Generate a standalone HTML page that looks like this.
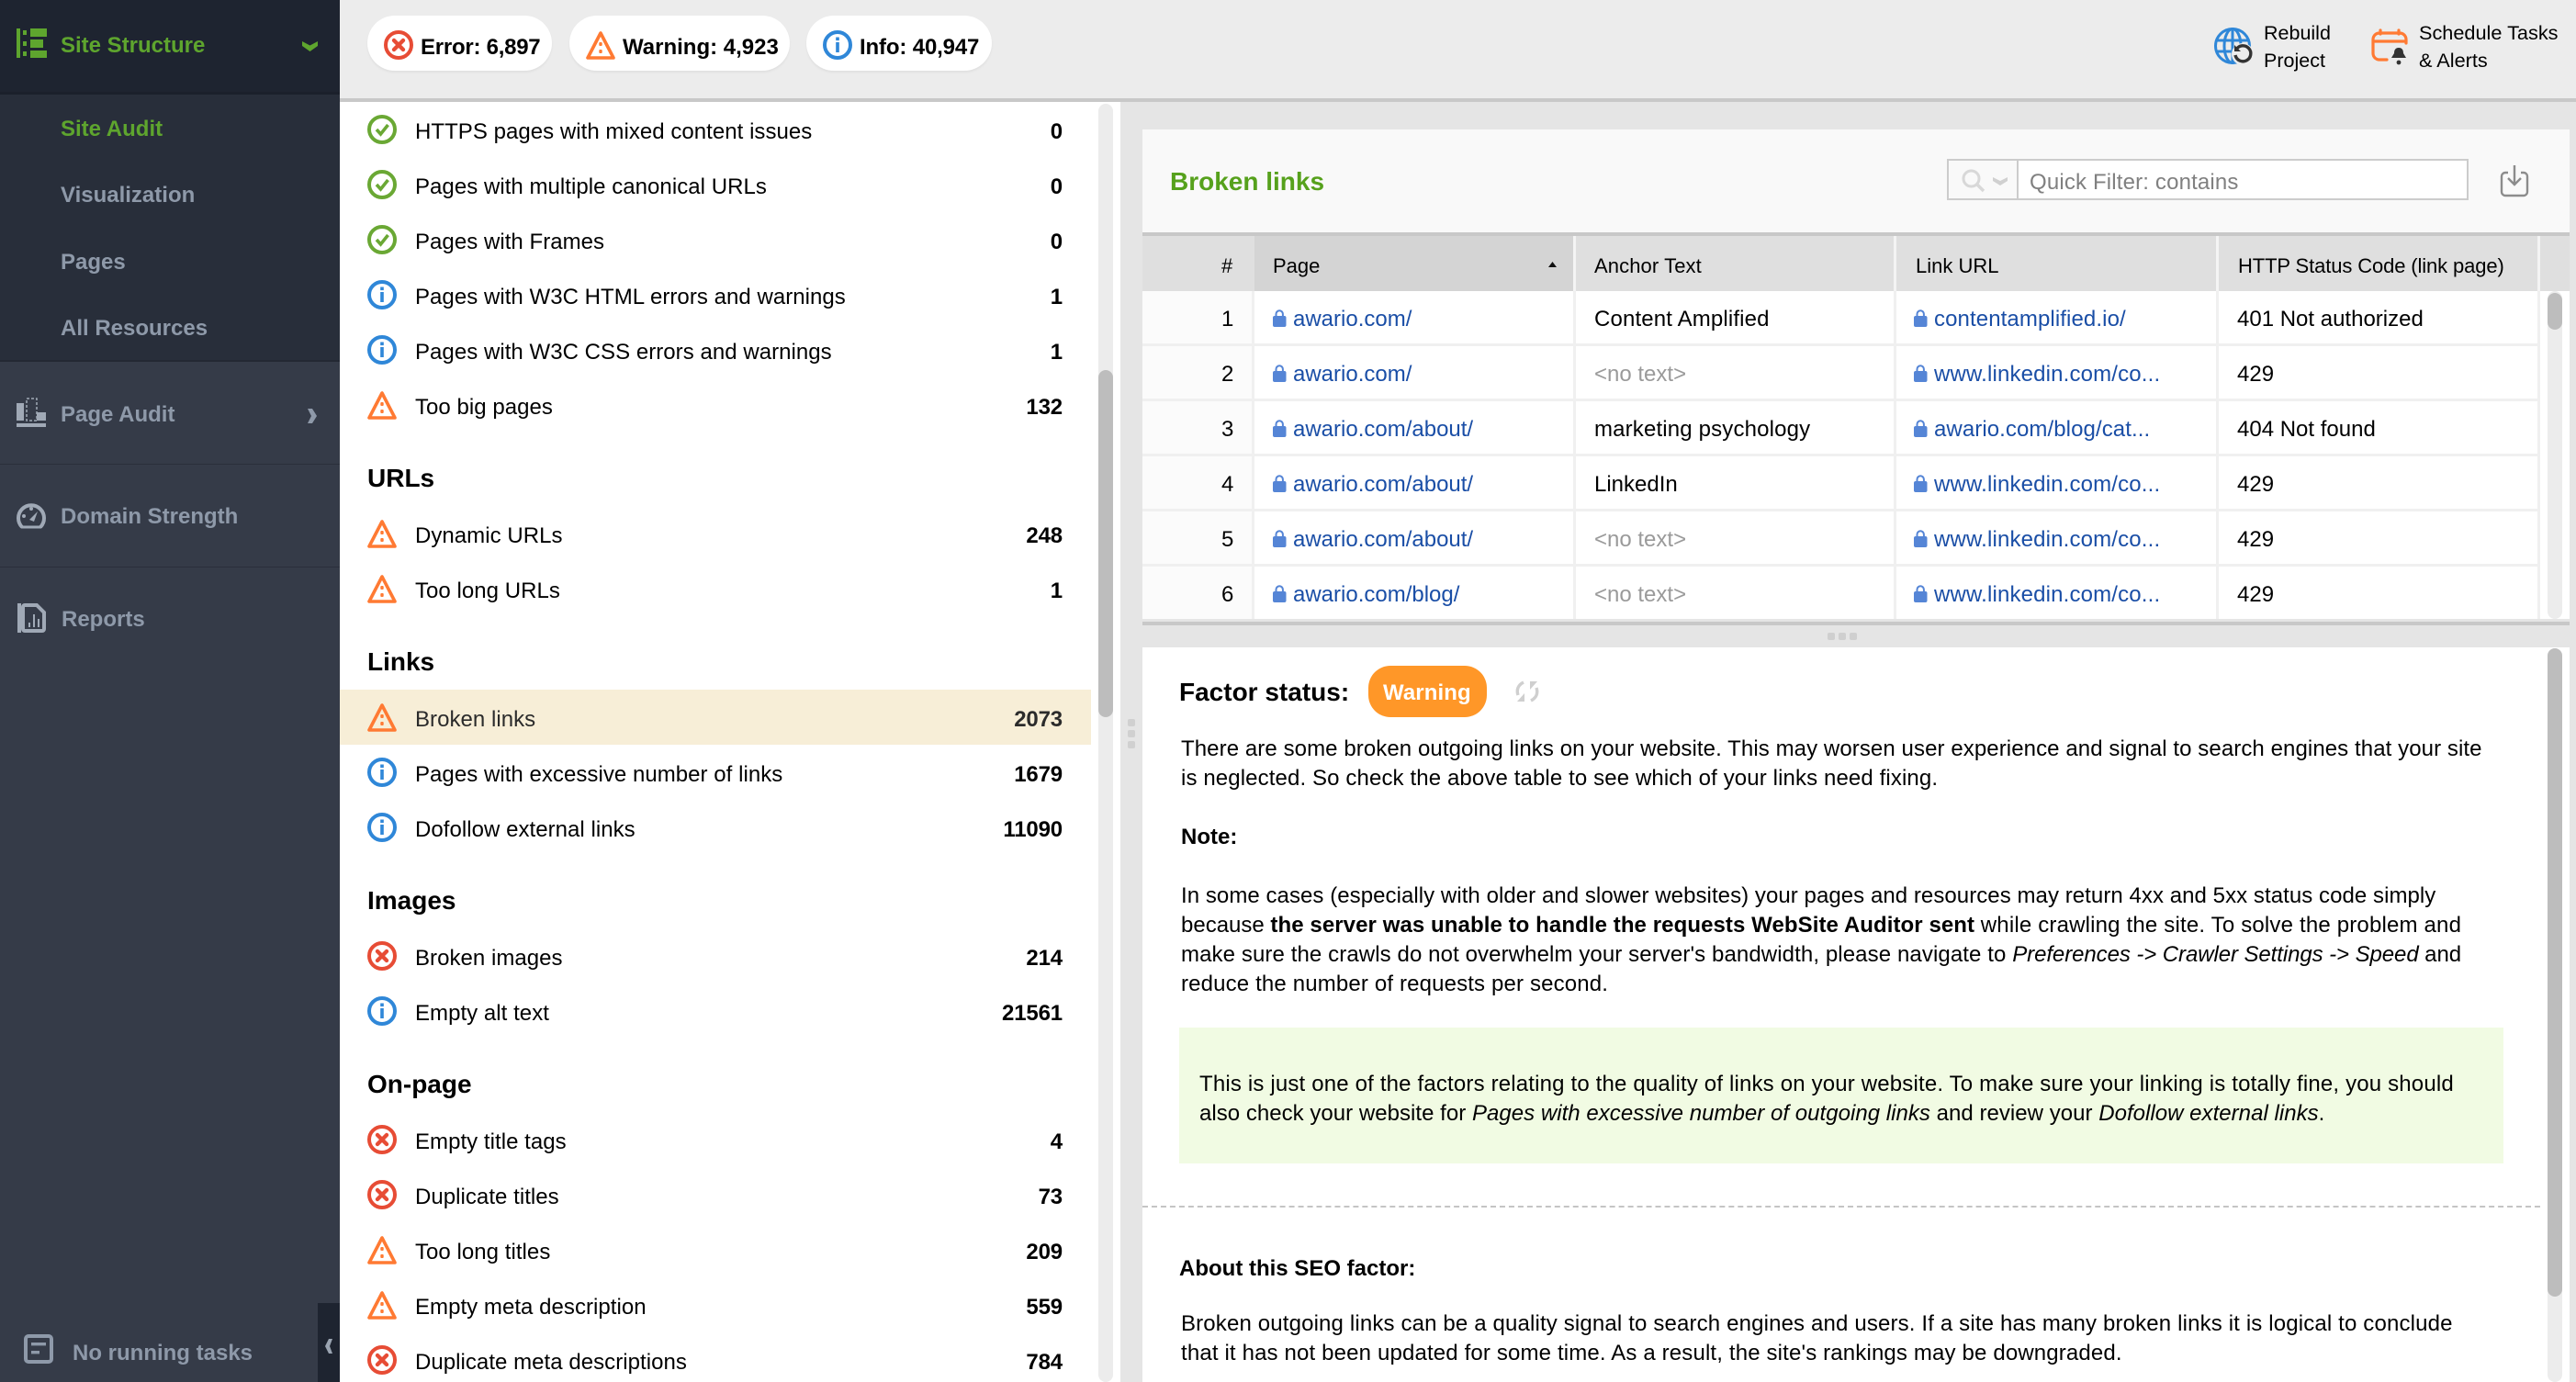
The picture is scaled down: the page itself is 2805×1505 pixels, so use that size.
<!DOCTYPE html>
<html><head><meta charset="utf-8"><title>Site Audit</title>
<style>
html,body{margin:0;padding:0;width:2805px;height:1505px;overflow:hidden;background:#e5e5e5}
body{position:relative;font-family:"Liberation Sans",Arial,sans-serif;color:#000;font-size:24px}
.b{position:absolute}
.t{position:absolute;white-space:nowrap;line-height:32px;height:32px;margin-top:1px}
.n{position:absolute;white-space:nowrap;line-height:32px;height:32px;font-weight:bold;text-align:right;right:1648px;letter-spacing:-.15px;margin-top:2px}
.h{position:absolute;white-space:nowrap;line-height:32px;height:32px;font-weight:bold;font-size:28px;left:400px}
.nav{position:absolute;white-space:nowrap;line-height:32px;height:32px;font-weight:bold;font-size:24px;color:#8e99a9;left:66px;margin-top:1px}
.i{position:absolute;width:32px;height:32px;left:400px}
.l{left:452px;letter-spacing:.04px;margin-top:2px}
.a{color:#1a4ea6}
.g{color:#9a9a9a}
.w{letter-spacing:.16px}
.lk{position:absolute;width:15px;height:19px}
svg{display:block;overflow:visible}
.hd{font-size:22px}
</style></head><body>
<svg width="0" height="0" style="position:absolute">
<symbol id="ok" viewBox="0 0 32 32"><circle cx="16" cy="16" r="14" fill="none" stroke="#6aa834" stroke-width="4"/><path d="M10 16l4.5 5 8-10" fill="none" stroke="#6aa834" stroke-width="3.6"/></symbol>
<symbol id="in" viewBox="0 0 32 32"><circle cx="16" cy="16" r="14" fill="none" stroke="#2f87d8" stroke-width="4"/><rect x="14.2" y="7.5" width="3.6" height="3.6" fill="#2f87d8"/><rect x="14.2" y="13" width="3.6" height="11" fill="#2f87d8"/></symbol>
<symbol id="er" viewBox="0 0 32 32"><circle cx="16" cy="16" r="14" fill="none" stroke="#e74c35" stroke-width="4"/><path d="M11 11l10 10M21 11l-10 10" fill="none" stroke="#e74c35" stroke-width="4.4" stroke-linecap="round"/></symbol>
<symbol id="wa" viewBox="0 0 32 32"><path d="M16 3L2 30h28z" fill="none" stroke="#ff7a33" stroke-width="3.6" stroke-linejoin="round"/><rect x="14.3" y="13" width="3.4" height="4" rx="1" fill="#ff7a33"/><rect x="14.3" y="21" width="3.4" height="4" rx="1" fill="#ff7a33"/></symbol>
<symbol id="lock" viewBox="0 0 15 19"><rect x="0" y="7" width="14.5" height="12" rx="2" fill="#5585d6"/><path d="M3.5 8V5a3.7 3.7 0 0 1 7.4 0v3" fill="none" stroke="#5585d6" stroke-width="2"/></symbol>
</svg>

<!-- sidebar -->
<div class="b" style="left:0;top:0;width:370px;height:1505px;background:#353b48"></div>
<div class="b" style="left:0;top:0;width:370px;height:100px;background:#1e2430"></div>
<div class="b" style="left:0;top:100px;width:370px;height:3px;background:#1b202b"></div>
<div class="b" style="left:0;top:103px;width:370px;height:289px;background:#282e3a"></div>
<div class="b" style="left:0;top:392px;width:370px;height:2px;background:#232833"></div>
<div class="b" style="left:0;top:505px;width:370px;height:1px;background:#2a2f3b"></div>
<div class="b" style="left:0;top:617px;width:370px;height:1px;background:#2a2f3b"></div>

<svg class="b" style="left:18px;top:31px" width="33" height="32" viewBox="0 0 33 32"><g fill="#5ea52e"><rect x="0" y="0" width="4" height="32"/><rect x="7" y="2" width="4" height="5"/><rect x="15" y="0" width="18" height="9"/><rect x="7" y="14" width="4" height="5"/><rect x="15" y="12" width="14" height="9"/><rect x="7" y="25" width="4" height="5"/><rect x="15" y="24" width="18" height="8"/></g></svg>
<div class="nav" style="top:33px;color:#5ea52e">Site Structure</div>
<svg class="b" style="left:329px;top:45px" width="17" height="11" viewBox="0 0 17 11"><path d="M0 0l8.5 4.5L17 0v5l-8.5 6L0 5z" fill="#5ea52e"/></svg>
<div class="nav" style="top:124px;color:#5ea52e">Site Audit</div>
<div class="nav" style="top:196px">Visualization</div>
<div class="nav" style="top:269px">Pages</div>
<div class="nav" style="top:341px">All Resources</div>

<svg class="b" style="left:18px;top:433px" width="32" height="32" viewBox="0 0 32 32"><g fill="#a0a9b6"><rect x="0" y="6" width="8" height="19"/><rect x="22" y="16" width="10" height="9"/><rect x="0" y="28" width="32" height="4"/></g><rect x="11" y="1" width="11" height="24" fill="none" stroke="#a0a9b6" stroke-width="1.5" stroke-dasharray="3 2"/></svg>
<div class="nav" style="top:435px">Page Audit</div>
<svg class="b" style="left:335px;top:445px" width="10" height="16" viewBox="0 0 10 16"><path d="M0 0h5l5 8-5 8H0l4-8z" fill="#8e99a9"/></svg>

<svg class="b" style="left:18px;top:546px" width="32" height="30" viewBox="0 0 32 30"><path d="M6 28A14 14 0 1 1 26 28" fill="none" stroke="#a0a9b6" stroke-width="4"/><path d="M5 28h22" stroke="#a0a9b6" stroke-width="3"/><circle cx="8" cy="16" r="2" fill="#a0a9b6"/><circle cx="16" cy="8" r="2" fill="#a0a9b6"/><path d="M14 20l9-9-4 11z" fill="#a0a9b6"/></svg>
<div class="nav" style="top:546px">Domain Strength</div>

<svg class="b" style="left:18px;top:657px" width="32" height="32" viewBox="0 0 32 32"><path d="M3 0v32" stroke="#a0a9b6" stroke-width="4"/><path d="M9 2h13l8 8v18a2 2 0 0 1-2 2H9a2 2 0 0 1-2-2V4a2 2 0 0 1 2-2z" fill="none" stroke="#a0a9b6" stroke-width="4"/><path d="M14 26v-5M19 26V12M24 26v-9" stroke="#a0a9b6" stroke-width="2"/></svg>
<div class="nav" style="top:658px;left:67px">Reports</div>

<svg class="b" style="left:26px;top:1453px" width="32" height="32" viewBox="0 0 32 32"><rect x="2" y="2" width="28" height="28" rx="3" fill="none" stroke="#8e99a9" stroke-width="4"/><rect x="8" y="9" width="16" height="3.4" fill="#8e99a9"/><rect x="8" y="18" width="9" height="3.4" fill="#8e99a9"/></svg>
<div class="nav" style="top:1457px;left:79px">No running tasks</div>
<div class="b" style="left:346px;top:1419px;width:24px;height:86px;background:#1e2430"></div>
<svg class="b" style="left:354px;top:1458px" width="8" height="16" viewBox="0 0 8 16"><path d="M8 0H4L0 8l4 8h4L5 8z" fill="#9aa4b1"/></svg>

<!-- top bar -->
<div class="b" style="left:370px;top:0;width:2435px;height:107px;background:#ececec"></div>
<div class="b" style="left:370px;top:107px;width:2435px;height:4px;background:#c8c8c8"></div>

<div class="b" style="left:400px;top:17px;width:201px;height:60px;background:#fff;border-radius:30px;box-shadow:0 2px 2px #e0e0e0"></div>
<div class="b" style="left:620px;top:17px;width:240px;height:60px;background:#fff;border-radius:30px;box-shadow:0 2px 2px #e0e0e0"></div>
<div class="b" style="left:878px;top:17px;width:202px;height:60px;background:#fff;border-radius:30px;box-shadow:0 2px 2px #e0e0e0"></div>
<svg class="i" style="left:418px;top:33px"><use href="#er"/></svg>
<div class="t" style="left:458px;top:35px;font-weight:bold;letter-spacing:-.25px">Error: 6,897</div>
<svg class="i" style="left:638px;top:33px"><use href="#wa"/></svg>
<div class="t" style="left:678px;top:35px;font-weight:bold">Warning: 4,923</div>
<svg class="i" style="left:896px;top:33px"><use href="#in"/></svg>
<div class="t" style="left:936px;top:35px;font-weight:bold;letter-spacing:-.15px">Info: 40,947</div>

<svg class="b" style="left:2411px;top:30px" width="42" height="41" viewBox="0 0 42 41"><g fill="none" stroke="#2f87d8" stroke-width="3"><circle cx="20" cy="20" r="18.5"/><ellipse cx="20" cy="20" rx="9" ry="18.5"/><path d="M2 14h36M2 26h36M20 1v38"/></g><circle cx="31" cy="29" r="12" fill="#ececec"/><path d="M24 24a8.5 8.5 0 1 1-1 6" fill="none" stroke="#333" stroke-width="3.4"/><path d="M22 19v7h7z" fill="#333"/></svg>
<div class="t hd" style="left:2465px;top:19px;font-size:21.5px">Rebuild</div>
<div class="t hd" style="left:2465px;top:49px;font-size:21.5px">Project</div>

<svg class="b" style="left:2582px;top:32px" width="40" height="40" viewBox="0 0 40 40"><g fill="none" stroke="#ff7a33" stroke-width="3.2" stroke-linecap="round"><path d="M17 33H9a7 7 0 0 1-7-7V11a7 7 0 0 1 7-7h22a7 7 0 0 1 7 7v4M2 13h36M10 1v4M30 1v4"/></g><path d="M30 20c4 0 5 3 5 6l3 5H22l3-5c0-3 1-6 5-6z" fill="#333"/><circle cx="30" cy="36" r="2.4" fill="#333"/></svg>
<div class="t hd" style="left:2634px;top:19px;font-size:21.7px">Schedule Tasks</div>
<div class="t hd" style="left:2634px;top:49px;font-size:21.7px">&amp; Alerts</div>

<!-- left list -->
<div class="b" style="left:370px;top:111px;width:850px;height:1394px;background:#fff"></div>
<div class="b" style="left:1196px;top:113px;width:16px;height:1392px;background:#ececec;border-radius:8px"></div>
<div class="b" style="left:1196px;top:403px;width:16px;height:378px;background:#bdbdbd;border-radius:8px"></div>
<div class="b" style="left:370px;top:751px;width:818px;height:60px;background:#f7eed7"></div>
<div class="b" style="left:1228px;top:783px;width:8px;height:8px;border-radius:2px;background:#d0d0d0"></div>
<div class="b" style="left:1228px;top:795px;width:8px;height:8px;border-radius:2px;background:#d0d0d0"></div>
<div class="b" style="left:1228px;top:807px;width:8px;height:8px;border-radius:2px;background:#d0d0d0"></div>

<svg class="i" style="top:125px"><use href="#ok"/></svg><div class="t l" style="top:126px">HTTPS pages with mixed content issues</div><div class="n" style="top:126px">0</div>
<svg class="i" style="top:185px"><use href="#ok"/></svg><div class="t l" style="top:186px">Pages with multiple canonical URLs</div><div class="n" style="top:186px">0</div>
<svg class="i" style="top:245px"><use href="#ok"/></svg><div class="t l" style="top:246px">Pages with Frames</div><div class="n" style="top:246px">0</div>
<svg class="i" style="top:305px"><use href="#in"/></svg><div class="t l" style="top:306px">Pages with W3C HTML errors and warnings</div><div class="n" style="top:306px">1</div>
<svg class="i" style="top:365px"><use href="#in"/></svg><div class="t l" style="top:366px">Pages with W3C CSS errors and warnings</div><div class="n" style="top:366px">1</div>
<svg class="i" style="top:425px"><use href="#wa"/></svg><div class="t l" style="top:426px">Too big pages</div><div class="n" style="top:426px">132</div>
<div class="h" style="top:505px">URLs</div>
<svg class="i" style="top:565px"><use href="#wa"/></svg><div class="t l" style="top:566px">Dynamic URLs</div><div class="n" style="top:566px">248</div>
<svg class="i" style="top:625px"><use href="#wa"/></svg><div class="t l" style="top:626px">Too long URLs</div><div class="n" style="top:626px">1</div>
<div class="h" style="top:705px">Links</div>
<svg class="i" style="top:765px"><use href="#wa"/></svg><div class="t l" style="top:766px;color:#2b2b2b">Broken links</div><div class="n" style="top:766px;color:#2b2b2b">2073</div>
<svg class="i" style="top:825px"><use href="#in"/></svg><div class="t l" style="top:826px">Pages with excessive number of links</div><div class="n" style="top:826px">1679</div>
<svg class="i" style="top:885px"><use href="#in"/></svg><div class="t l" style="top:886px">Dofollow external links</div><div class="n" style="top:886px">11090</div>
<div class="h" style="top:965px">Images</div>
<svg class="i" style="top:1025px"><use href="#er"/></svg><div class="t l" style="top:1026px">Broken images</div><div class="n" style="top:1026px">214</div>
<svg class="i" style="top:1085px"><use href="#in"/></svg><div class="t l" style="top:1086px">Empty alt text</div><div class="n" style="top:1086px">21561</div>
<div class="h" style="top:1165px">On-page</div>
<svg class="i" style="top:1225px"><use href="#er"/></svg><div class="t l" style="top:1226px">Empty title tags</div><div class="n" style="top:1226px">4</div>
<svg class="i" style="top:1285px"><use href="#er"/></svg><div class="t l" style="top:1286px">Duplicate titles</div><div class="n" style="top:1286px">73</div>
<svg class="i" style="top:1345px"><use href="#wa"/></svg><div class="t l" style="top:1346px">Too long titles</div><div class="n" style="top:1346px">209</div>
<svg class="i" style="top:1405px"><use href="#wa"/></svg><div class="t l" style="top:1406px">Empty meta description</div><div class="n" style="top:1406px">559</div>
<svg class="i" style="top:1465px"><use href="#er"/></svg><div class="t l" style="top:1466px">Duplicate meta descriptions</div><div class="n" style="top:1466px">784</div>

<!-- right top panel -->
<div class="b" style="left:1244px;top:141px;width:1554px;height:112px;background:#f9f9f9"></div>
<div class="b" style="left:1244px;top:253px;width:1554px;height:4px;background:#c8c8c8"></div>
<div class="t" style="left:1274px;top:181px;font-weight:bold;font-size:28px;color:#56a11c">Broken links</div>
<div class="b" style="left:2120px;top:173px;width:564px;height:41px;border:2px solid #ccc;background:#fff"></div>
<div class="b" style="left:2120px;top:173px;width:74px;height:41px;border:2px solid #ccc;background:#f9f9f9"></div>
<svg class="b" style="left:2136px;top:184px" width="26" height="26" viewBox="0 0 26 26"><circle cx="10.5" cy="10.5" r="8.5" fill="none" stroke="#d8d8d8" stroke-width="3"/><path d="M17 17l7 7" stroke="#d8d8d8" stroke-width="3.4"/></svg>
<svg class="b" style="left:2170px;top:193px" width="16" height="9" viewBox="0 0 16 9"><path d="M0 0l8 4 8-4v4l-8 5-8-5z" fill="#d0d0d0"/></svg>
<div class="t" style="left:2210px;top:182px;color:#808080;letter-spacing:.16px">Quick Filter: contains</div>
<svg class="b" style="left:2723px;top:180px" width="30" height="34" viewBox="0 0 30 34"><path d="M8 8H5a4 4 0 0 0-4 4v17a4 4 0 0 0 4 4h20a4 4 0 0 0 4-4V12a4 4 0 0 0-4-4h-3" fill="none" stroke="#8c8c8c" stroke-width="2.4"/><path d="M15 0v20M8 14l7 7 7-7" fill="none" stroke="#8c8c8c" stroke-width="2.4"/></svg>

<!-- table -->
<div class="b" style="left:1244px;top:257px;width:1554px;height:60px;background:#dfdfdf"></div>
<div class="b" style="left:1366px;top:257px;width:347px;height:60px;background:#d4d4d4"></div>
<div class="b" style="left:1244px;top:317px;width:1554px;height:357px;background:#f0f0f0"></div>
<div class="b" style="left:1244px;top:677px;width:1554px;height:4px;background:#c8c8c8"></div>
<div class="b" style="left:1244px;top:674px;width:1554px;height:3px;background:#e5e5e5"></div>
<div class="b" style="left:1713px;top:257px;width:3px;height:60px;background:#f4f4f4"></div>
<div class="b" style="left:2062px;top:257px;width:3px;height:60px;background:#f4f4f4"></div>
<div class="b" style="left:2413px;top:257px;width:3px;height:60px;background:#f4f4f4"></div>
<div class="b" style="left:2763px;top:257px;width:3px;height:60px;background:#f4f4f4"></div>

<!-- rows backgrounds -->
<div class="b" style="left:1244px;top:317px;width:119px;height:57px;background:#fbfbfb"></div><div class="b" style="left:1366px;top:317px;width:347px;height:57px;background:#fff"></div><div class="b" style="left:1716px;top:317px;width:346px;height:57px;background:#fff"></div><div class="b" style="left:2065px;top:317px;width:348px;height:57px;background:#fff"></div><div class="b" style="left:2416px;top:317px;width:347px;height:57px;background:#fff"></div>
<div class="b" style="left:1244px;top:377px;width:119px;height:57px;background:#fbfbfb"></div><div class="b" style="left:1366px;top:377px;width:347px;height:57px;background:#fff"></div><div class="b" style="left:1716px;top:377px;width:346px;height:57px;background:#fff"></div><div class="b" style="left:2065px;top:377px;width:348px;height:57px;background:#fff"></div><div class="b" style="left:2416px;top:377px;width:347px;height:57px;background:#fff"></div>
<div class="b" style="left:1244px;top:437px;width:119px;height:57px;background:#fbfbfb"></div><div class="b" style="left:1366px;top:437px;width:347px;height:57px;background:#fff"></div><div class="b" style="left:1716px;top:437px;width:346px;height:57px;background:#fff"></div><div class="b" style="left:2065px;top:437px;width:348px;height:57px;background:#fff"></div><div class="b" style="left:2416px;top:437px;width:347px;height:57px;background:#fff"></div>
<div class="b" style="left:1244px;top:497px;width:119px;height:57px;background:#fbfbfb"></div><div class="b" style="left:1366px;top:497px;width:347px;height:57px;background:#fff"></div><div class="b" style="left:1716px;top:497px;width:346px;height:57px;background:#fff"></div><div class="b" style="left:2065px;top:497px;width:348px;height:57px;background:#fff"></div><div class="b" style="left:2416px;top:497px;width:347px;height:57px;background:#fff"></div>
<div class="b" style="left:1244px;top:557px;width:119px;height:57px;background:#fbfbfb"></div><div class="b" style="left:1366px;top:557px;width:347px;height:57px;background:#fff"></div><div class="b" style="left:1716px;top:557px;width:346px;height:57px;background:#fff"></div><div class="b" style="left:2065px;top:557px;width:348px;height:57px;background:#fff"></div><div class="b" style="left:2416px;top:557px;width:347px;height:57px;background:#fff"></div>
<div class="b" style="left:1244px;top:617px;width:119px;height:57px;background:#fbfbfb"></div><div class="b" style="left:1366px;top:617px;width:347px;height:57px;background:#fff"></div><div class="b" style="left:1716px;top:617px;width:346px;height:57px;background:#fff"></div><div class="b" style="left:2065px;top:617px;width:348px;height:57px;background:#fff"></div><div class="b" style="left:2416px;top:617px;width:347px;height:57px;background:#fff"></div>
<div class="b" style="left:2766px;top:317px;width:32px;height:357px;background:#fff"></div>
<div class="b" style="left:2774px;top:317px;width:16px;height:357px;background:#ececec;border-radius:8px"></div>
<div class="b" style="left:2774px;top:319px;width:16px;height:40px;background:#bdbdbd;border-radius:8px"></div>

<!-- header text -->
<div class="t hd" style="left:1330px;top:273px">#</div>
<div class="t hd" style="left:1386px;top:273px">Page</div>
<svg class="b" style="left:1686px;top:285px" width="9" height="6" viewBox="0 0 9 6"><path d="M4.5 0L9 6H0z" fill="#111"/></svg>
<div class="t hd" style="left:1736px;top:273px;letter-spacing:.1px">Anchor Text</div>
<div class="t hd" style="left:2086px;top:273px">Link URL</div>
<div class="t hd" style="left:2437px;top:273px;letter-spacing:-.12px">HTTP Status Code (link page)</div>

<!-- row 1 -->
<div class="t" style="left:1330px;top:331px">1</div><svg class="lk" style="left:1386px;top:337px"><use href="#lock"/></svg><div class="t a" style="left:1408px;top:331px">awario.com/</div><div class="t" style="left:1736px;top:331px;letter-spacing:.15px">Content Amplified</div><svg class="lk" style="left:2084px;top:337px"><use href="#lock"/></svg><div class="t a" style="left:2106px;top:331px;letter-spacing:.1px">contentamplified.io/</div><div class="t" style="left:2436px;top:331px">401 Not authorized</div>
<!-- row 2 -->
<div class="t" style="left:1330px;top:391px">2</div><svg class="lk" style="left:1386px;top:397px"><use href="#lock"/></svg><div class="t a" style="left:1408px;top:391px">awario.com/</div><div class="t g" style="left:1736px;top:391px">&lt;no text&gt;</div><svg class="lk" style="left:2084px;top:397px"><use href="#lock"/></svg><div class="t a w" style="left:2106px;top:391px">www.linkedin.com/co...</div><div class="t" style="left:2436px;top:391px">429</div>
<!-- row 3 -->
<div class="t" style="left:1330px;top:451px">3</div><svg class="lk" style="left:1386px;top:457px"><use href="#lock"/></svg><div class="t a" style="left:1408px;top:451px">awario.com/about/</div><div class="t" style="left:1736px;top:451px;letter-spacing:.16px">marketing psychology</div><svg class="lk" style="left:2084px;top:457px"><use href="#lock"/></svg><div class="t a" style="left:2106px;top:451px;letter-spacing:.08px">awario.com/blog/cat...</div><div class="t" style="left:2436px;top:451px">404 Not found</div>
<!-- row 4 -->
<div class="t" style="left:1330px;top:511px">4</div><svg class="lk" style="left:1386px;top:517px"><use href="#lock"/></svg><div class="t a" style="left:1408px;top:511px">awario.com/about/</div><div class="t" style="left:1736px;top:511px">LinkedIn</div><svg class="lk" style="left:2084px;top:517px"><use href="#lock"/></svg><div class="t a w" style="left:2106px;top:511px">www.linkedin.com/co...</div><div class="t" style="left:2436px;top:511px">429</div>
<!-- row 5 -->
<div class="t" style="left:1330px;top:571px">5</div><svg class="lk" style="left:1386px;top:577px"><use href="#lock"/></svg><div class="t a" style="left:1408px;top:571px">awario.com/about/</div><div class="t g" style="left:1736px;top:571px">&lt;no text&gt;</div><svg class="lk" style="left:2084px;top:577px"><use href="#lock"/></svg><div class="t a w" style="left:2106px;top:571px">www.linkedin.com/co...</div><div class="t" style="left:2436px;top:571px">429</div>
<!-- row 6 -->
<div class="t" style="left:1330px;top:631px">6</div><svg class="lk" style="left:1386px;top:637px"><use href="#lock"/></svg><div class="t a" style="left:1408px;top:631px">awario.com/blog/</div><div class="t g" style="left:1736px;top:631px">&lt;no text&gt;</div><svg class="lk" style="left:2084px;top:637px"><use href="#lock"/></svg><div class="t a w" style="left:2106px;top:631px">www.linkedin.com/co...</div><div class="t" style="left:2436px;top:631px">429</div>

<!-- splitter dots -->
<div class="b" style="left:1990px;top:689px;width:8px;height:8px;border-radius:2px;background:#cfcfcf"></div>
<div class="b" style="left:2002px;top:689px;width:8px;height:8px;border-radius:2px;background:#cfcfcf"></div>
<div class="b" style="left:2014px;top:689px;width:8px;height:8px;border-radius:2px;background:#cfcfcf"></div>

<!-- bottom pane -->
<div class="b" style="left:1244px;top:705px;width:1554px;height:800px;background:#fff"></div>
<div class="b" style="left:2774px;top:706px;width:16px;height:799px;background:#ececec;border-radius:8px"></div>
<div class="b" style="left:2774px;top:706px;width:16px;height:706px;background:#bdbdbd;border-radius:8px"></div>
<div class="t" style="left:1284px;top:737px;font-weight:bold;font-size:28px">Factor status:</div>
<div class="b" style="left:1490px;top:725px;width:129px;height:56px;border-radius:24px;background:#ff9728"></div>
<div class="t" style="left:1506px;top:738px;font-weight:bold;color:#fff;letter-spacing:.1px">Warning</div>
<svg class="b" style="left:1650px;top:741px" width="26" height="24" viewBox="0 0 26 24"><path d="M9 2C3 5 1 10 3 16M17 22c6-3 8-8 6-14" fill="none" stroke="#cfcfcf" stroke-width="3.4"/><path d="M10 14v9H2zM16 10V1h8z" fill="#cfcfcf"/></svg>

<div class="t" style="left:1286px;top:799px;letter-spacing:.085px">There are some broken outgoing links on your website. This may worsen user experience and signal to search engines that your site</div>
<div class="t" style="left:1286px;top:831px;letter-spacing:.115px">is neglected. So check the above table to see which of your links need fixing.</div>
<div class="t" style="left:1286px;top:895px;font-weight:bold">Note:</div>
<div class="t" style="left:1286px;top:959px;letter-spacing:.057px">In some cases (especially with older and slower websites) your pages and resources may return 4xx and 5xx status code simply</div>
<div class="t" style="left:1286px;top:991px">because <b style="letter-spacing:.08px">the server was unable to handle the requests WebSite Auditor sent</b> <span style="letter-spacing:.18px">while crawling the site. To solve the problem and</span></div>
<div class="t" style="left:1286px;top:1023px"><span style="letter-spacing:.1px">make sure the crawls do not overwhelm your server's bandwidth, please navigate to </span><span style="letter-spacing:-.08px"><i>Preferences -&gt; Crawler Settings -&gt; Speed</i> and</span></div>
<div class="t" style="left:1286px;top:1055px;letter-spacing:.15px">reduce the number of requests per second.</div>

<div class="b" style="left:1284px;top:1119px;width:1442px;height:148px;background:#f1fbe3"></div>
<div class="t" style="left:1306px;top:1164px;letter-spacing:.17px">This is just one of the factors relating to the quality of links on your website. To make sure your linking is totally fine, you should</div>
<div class="t" style="left:1306px;top:1196px;letter-spacing:.03px">also check your website for <i>Pages with excessive number of outgoing links</i> and review your <i>Dofollow external links</i>.</div>

<div class="b" style="left:1244px;top:1313px;width:1522px;height:0;border-top:2px dashed #c4c4c4"></div>

<div class="t" style="left:1284px;top:1365px;font-weight:bold">About this SEO factor:</div>
<div class="t" style="left:1286px;top:1425px;letter-spacing:.15px">Broken outgoing links can be a quality signal to search engines and users. If a site has many broken links it is logical to conclude</div>
<div class="t" style="left:1286px;top:1457px;letter-spacing:.15px">that it has not been updated for some time. As a result, the site's rankings may be downgraded.</div>
</body></html>
